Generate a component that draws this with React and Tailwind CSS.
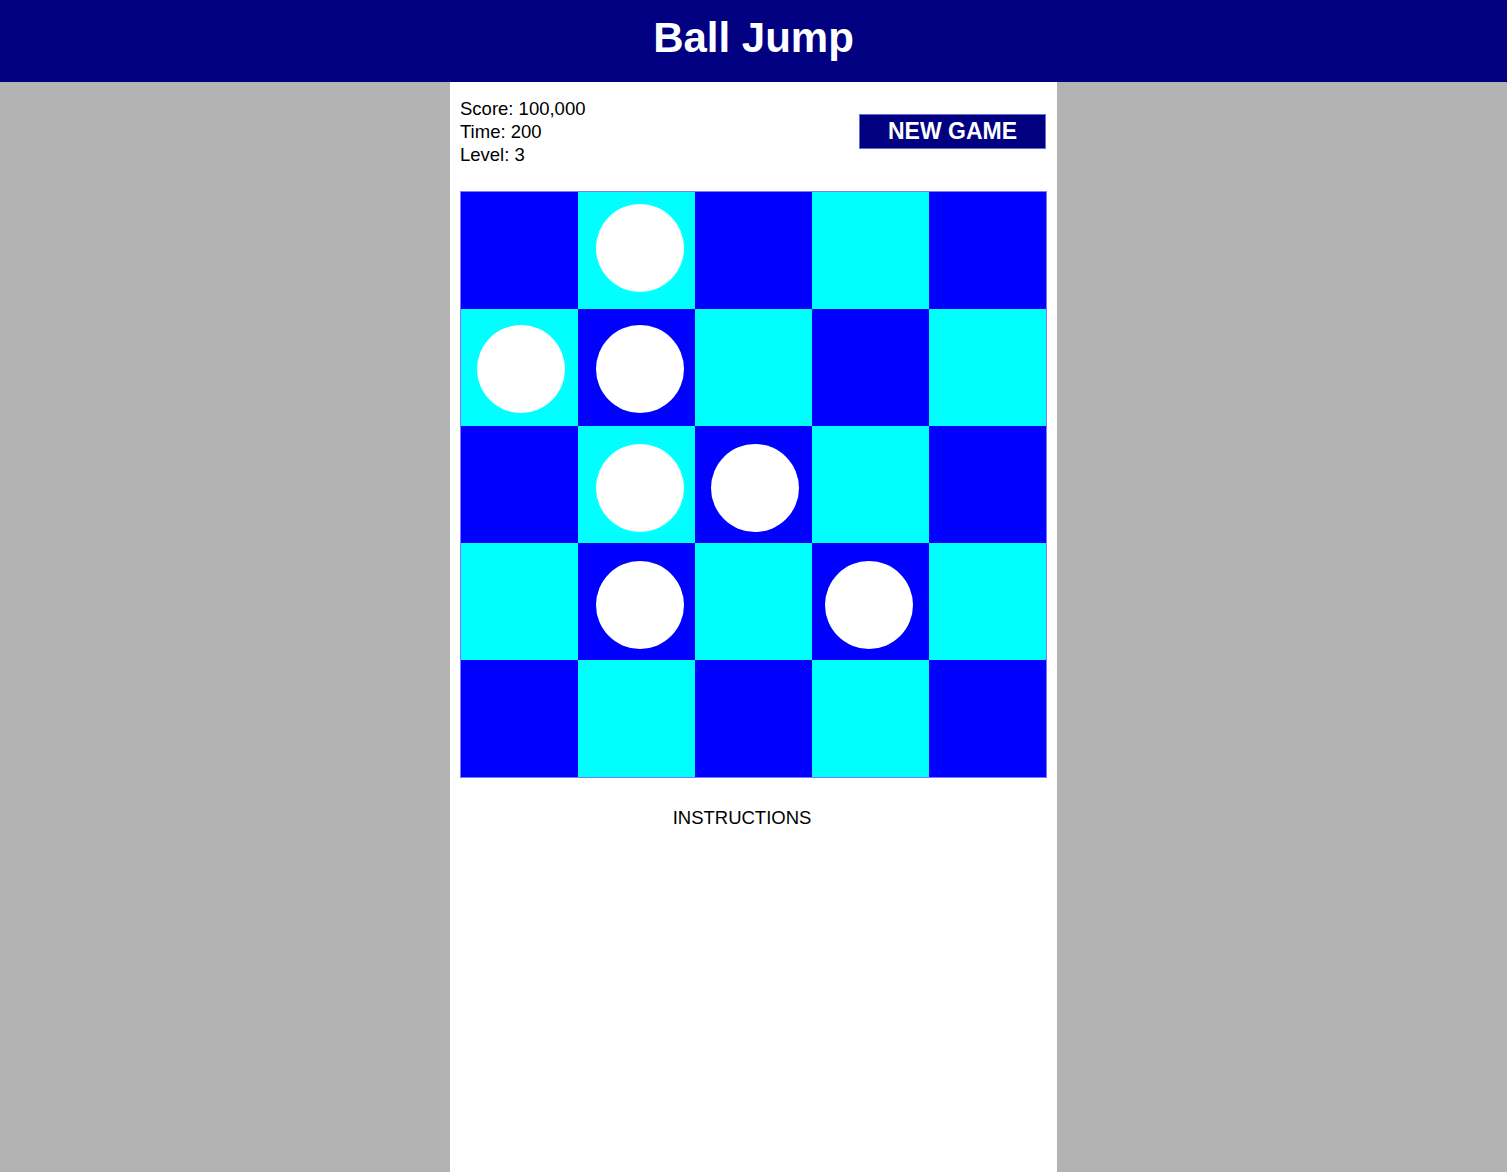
// small per-ball nudges, the balls aren't perfectly centred in the reference
const balls = {
  '0-1': 'translate-x-[3px] -translate-y-[3px]',
  '1-0': 'translate-x-[1px] translate-y-[1px]',
  '1-1': 'translate-x-[3px] translate-y-[1px]',
  '2-1': 'translate-x-[3px] translate-y-[3px]',
  '2-2': 'translate-x-[1px] translate-y-[3px]',
  '3-1': 'translate-x-[3px] translate-y-[3px]',
  '3-3': '-translate-x-[2px] translate-y-[3px]',
};

const stats = [
  { label: 'Score', value: '100,000' },
  { label: 'Time', value: '200' },
  { label: 'Level', value: '3' },
];

function Cell({ row, col }) {
  const dark = (row + col) % 2 === 0;
  const ball = balls[`${row}-${col}`];
  return (
    <div className={`flex items-center justify-center ${dark ? 'bg-[#0000ff]' : 'bg-[#00ffff]'}`}>
      {ball && <div className={`h-[88px] w-[88px] rounded-full bg-white ${ball}`} />}
    </div>
  );
}

export default function App() {
  const rows = [0, 1, 2, 3, 4];

  return (
    <div className="flex min-h-[1172px] flex-col bg-[#b3b3b3] font-['Liberation_Sans',Arial,sans-serif]">
      <header className="h-[82px] bg-[#000080] pt-[14px] text-center">
        <h1 className="text-[42px] font-bold leading-[48px] text-white">Ball Jump</h1>
      </header>

      <main className="mx-auto flex w-[607px] flex-1 flex-col bg-white px-[10px] pt-[15px]">
        <div className="flex items-center justify-between pr-px">
          <div className="text-[18.5px] leading-[23px] text-black">
            {stats.map((stat) => (
              <p key={stat.label}>
                {stat.label}: {stat.value}
              </p>
            ))}
          </div>
          <button
            type="button"
            className="-mt-px flex h-[35px] w-[187px] items-center justify-center border border-[#6b6bd6] bg-[#000080] text-[23px] font-bold text-white"
          >
            NEW GAME
          </button>
        </div>

        <div className="mt-[25px] grid h-[587px] grid-cols-5 grid-rows-5 border border-[#7a7aff]">
          {rows.map((row) => rows.map((col) => <Cell key={`${row}-${col}`} row={row} col={col} />))}
        </div>

        <div className="mt-[28px] flex justify-center pr-[23px]">
          <p className="text-[18.5px] leading-[23px] text-black">INSTRUCTIONS</p>
        </div>
      </main>
    </div>
  );
}
